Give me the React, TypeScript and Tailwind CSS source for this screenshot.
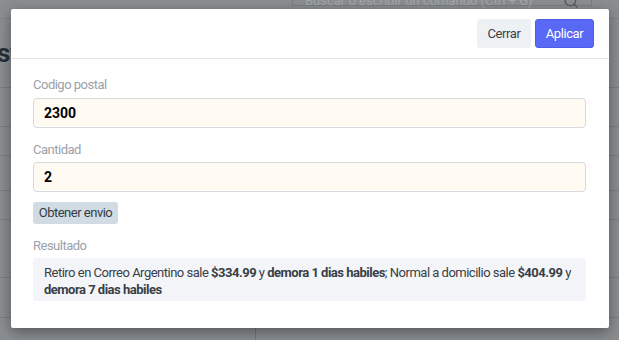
import { Search } from "lucide-react";

const rows = [
  { h: "h-[39px]" },
  { h: "h-[29px]" },
  { h: "h-[35px]" },
  { h: "h-[29px]" },
  { h: "h-[58px]" },
  { h: "h-[40px]" },
];

function BackgroundPage() {
  return (
    <div className="w-full h-full bg-[#8b8e90]">
      <div className="flex h-[19px] border-b border-[#808385]">
        <div className="ml-[292px] w-[300px] h-[9px] border-x border-b border-[#7c7f81] flex items-center justify-between px-3 -mt-[3px]">
          <span className="text-[13px] text-[#a3a6a8]">Buscar o escribir un comando (Ctrl + G)</span>
          <Search className="w-4 h-4 text-[#555a5e]" strokeWidth={2} />
        </div>
      </div>
      <div className="h-[69px] border-b border-[#7c7f81] flex items-center">
        <span className="-ml-[3px] text-[26px] font-bold text-[#25303a]">st</span>
      </div>
      {rows.map((r, i) => (
        <div key={`row-${i}`} className={`${r.h} border-b border-[#7c7f81]`} />
      ))}
      <div className="ml-[255px] h-[30px] border-l border-[#74777a]" />
    </div>
  );
}

export default function App() {
  return (
    <div className="relative w-[619px] h-[340px] overflow-hidden font-['Roboto',sans-serif]">
      <BackgroundPage />

      <div className="absolute left-[11px] top-[9px] w-[598px] h-[319px] bg-white rounded-[2px] shadow-[0_4px_14px_rgba(0,0,0,0.4)]">
        <div className="h-[50px] border-b border-[#e3e5e8] flex items-start justify-end gap-1 pt-[10px] pr-[15px]">
          <button className="h-[29px] w-[54px] rounded-[3px] bg-[#eef1f4] text-[13px] tracking-[-0.4px] text-[#3a4149]">
            Cerrar
          </button>
          <button className="h-[29px] w-[59px] rounded-[3px] bg-[#5a69f5] border border-[#4e5de8] text-[13px] tracking-[-0.4px] text-white">
            Aplicar
          </button>
        </div>

        <div className="pt-[18px] pl-[22px] pr-[23px] text-[13px] tracking-[-0.5px]">
          <div className="leading-[16px] text-[#9aa1aa] mb-[5px]">Codigo postal</div>
          <div className="h-[30px] rounded-[4px] border border-[#d6d9dd] bg-[#fffbf2] flex items-center pl-[10px] text-[14px] tracking-normal font-bold text-black">
            2300
          </div>

          <div className="mt-[14px] leading-[16px] text-[#9aa1aa] mb-[4px]">Cantidad</div>
          <div className="h-[30px] rounded-[4px] border border-[#d6d9dd] bg-[#fffbf2] flex items-center pl-[10px] text-[14px] tracking-normal font-bold text-black">
            2
          </div>

          <button className="block mt-[10px] h-[22px] w-[85px] rounded-[3px] bg-[#d1dbe3] text-[#333b44]">
            Obtener envio
          </button>

          <div className="mt-[14px] leading-[16px] text-[#9aa1aa] mb-[4px]">Resultado</div>
          <div className="h-[43px] rounded-[3px] bg-[#f4f5f8] px-[11px] pt-[6px] leading-[17px] text-[#383f47]">
            Retiro en Correo Argentino sale <b className="font-bold">$334.99</b> y{" "}
            <b className="font-bold">demora 1 dias habiles</b>; Normal a domicilio sale{" "}
            <b className="font-bold">$404.99</b> y <b className="font-bold">demora 7 dias habiles</b>
          </div>
        </div>
      </div>
    </div>
  );
}
